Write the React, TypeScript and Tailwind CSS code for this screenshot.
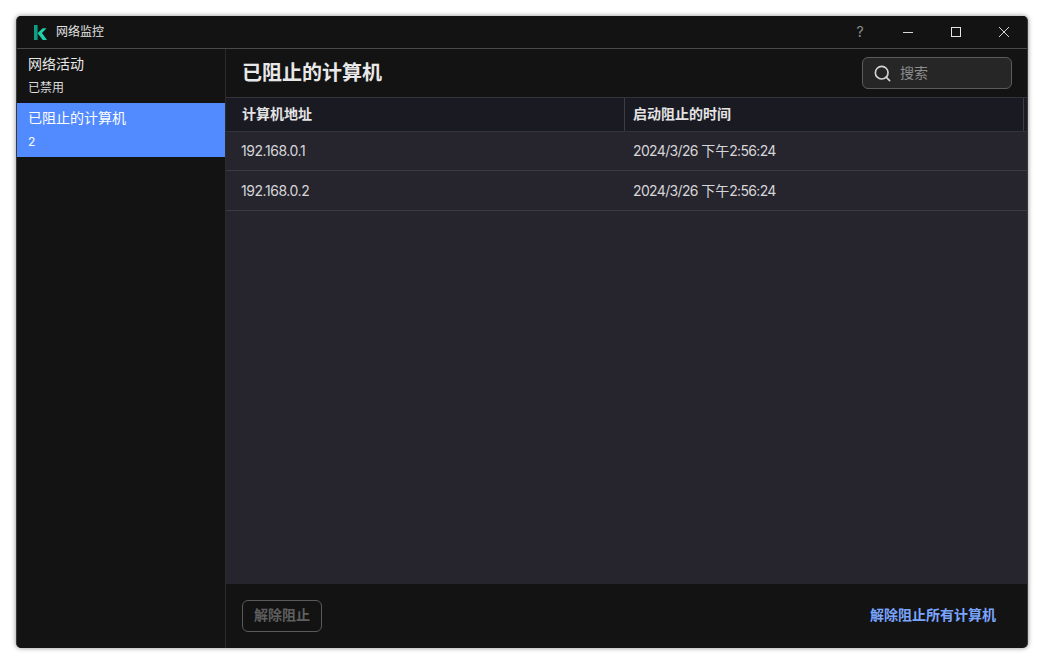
import { Search } from 'lucide-react';

const font = "font-['Inter','Noto_Sans_CJK_SC',sans-serif]";

const rows = [
  { id: 1, address: '192.168.0.1', date: '2024/3/26 ', period: '下午', time: '2:56:24' },
  { id: 2, address: '192.168.0.2', date: '2024/3/26 ', period: '下午', time: '2:56:24' },
];

function KasperskyLogo() {
  return (
    <svg width="13" height="15" viewBox="0 0 13 15" className="mt-px">
      <path d="M0 0h3.6v15H0z" fill="#0f9d84" />
      <path d="M3.6 8.2 8.6 3.2h4L8 8l5 7H8.8L3.6 8.2z" fill="#1fd1a8" />
    </svg>
  );
}

function TitleBar() {
  return (
    <div className="flex h-[33px] shrink-0 items-center border-b border-[#4a4a4a] bg-[#131313]">
      <div className="ml-[17px] flex items-center gap-[9px]">
        <KasperskyLogo />
        <span className="text-xs text-[#e2e2e2]">网络监控</span>
      </div>
      <div className="-mr-px ml-auto flex h-full items-center text-[#bdbdbd]">
        <span className="flex w-12 justify-center text-sm text-[#8f8f8f]">?</span>
        <button className="flex h-full w-12 items-center justify-center">
          <svg width="12" height="12" viewBox="0 0 12 12" stroke="#d8d8d8" fill="none">
            <path d="M1 6.5h10" />
          </svg>
        </button>
        <button className="flex h-full w-12 items-center justify-center">
          <svg width="12" height="12" viewBox="0 0 12 12" stroke="#e4e4e4" fill="none">
            <rect x="1.5" y="1.5" width="9" height="9" />
          </svg>
        </button>
        <button className="flex h-full w-12 items-center justify-center">
          <svg width="12" height="12" viewBox="0 0 12 12" stroke="#d8d8d8" fill="none">
            <path d="M1 1l10 10M11 1 1 11" />
          </svg>
        </button>
      </div>
    </div>
  );
}

function Sidebar() {
  return (
    <div className="flex w-[209px] shrink-0 flex-col border-r border-[#2b2b2b] bg-[#131313]">
      <div className="h-[54px] px-[11px] pt-[5px]">
        <div className="text-sm leading-5 text-[#e8e8e8]">网络活动</div>
        <div className="mt-1 text-xs leading-5 text-[#dcdcdc]">已禁用</div>
      </div>
      <div className="h-[54px] bg-[#528bff] px-[11px] pt-[5px] text-white">
        <div className="text-sm leading-5">已阻止的计算机</div>
        <div className="mt-1 text-xs leading-5">2</div>
      </div>
    </div>
  );
}

function Table() {
  return (
    <div className="flex-1 bg-[#26252e]">
      <div className="flex h-[35px] border-y border-[#33333b] bg-[#1a1a23] text-sm font-semibold text-[#e4e4e4]">
        <div className="flex w-[399px] items-center border-r border-[#3c3c44] pb-0.5 pl-4">计算机地址</div>
        <div className="flex w-[399px] items-center border-r border-[#3c3c44] pb-0.5 pl-2">启动阻止的时间</div>
      </div>
      <div>
        {rows.map((row) => (
          <div key={row.id} className="flex h-[40px] items-center border-b border-[#3c3b44] text-sm text-[#d6d6d8] first:h-[39px]">
            <div className="w-[399px] pl-[15px] tracking-[-0.45px]">{row.address}</div>
            <div className="pl-2 tracking-[-0.65px]">
              {row.date}
              <span className="tracking-normal">{row.period}</span>
              {row.time}
            </div>
          </div>
        ))}
      </div>
    </div>
  );
}

export default function App() {
  return (
    <div className={`h-[664px] w-[1044px] bg-white p-4 ${font}`}>
      <div className="flex h-[632px] w-[1012px] flex-col overflow-hidden rounded-[5px] border-x border-[#3a3a3a] bg-[#131313] shadow-[0_0_5px_rgba(0,0,0,0.45)]">
        <TitleBar />
        <div className="flex min-h-0 flex-1">
          <Sidebar />
          <div className="flex min-w-0 flex-1 flex-col">
            <div className="flex h-[48px] shrink-0 items-center justify-between pl-4 pr-[15px]">
              <h1 className="text-xl leading-none font-bold text-[#e8e8e8]">已阻止的计算机</h1>
              <div className="flex h-8 w-[150px] items-center gap-2 rounded-md border border-[#5c5c5c] bg-[#262626] pl-[10px] text-sm text-[#8c8c8c]">
                <Search size={19} strokeWidth={2.1} className="text-[#d4d4d4]" />
                <span>搜索</span>
              </div>
            </div>
            <Table />
            <div className="flex h-16 shrink-0 items-center justify-between pl-4 pr-[31px]">
              <button className="h-8 w-20 rounded-md border border-[#5a5a5a] pb-0.5 text-sm font-semibold text-[#5f5f5f]">解除阻止</button>
              <button className="pb-0.5 text-sm font-semibold text-[#7aa5ff]">解除阻止所有计算机</button>
            </div>
          </div>
        </div>
      </div>
    </div>
  );
}
